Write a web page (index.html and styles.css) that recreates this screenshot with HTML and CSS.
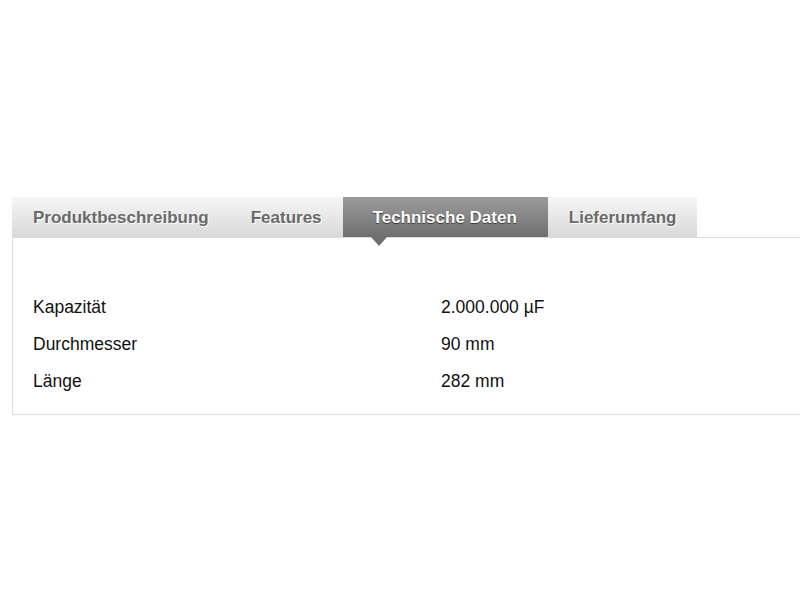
FILE: index.html
```html
<!DOCTYPE html>
<html lang="de">
<head>
<meta charset="utf-8">
<title>Technische Daten</title>
<link rel="stylesheet" href="styles.css">
</head>
<body>
<div class="wrap">
  <ul class="tabs">
    <li class="tab">Produktbeschreibung</li>
    <li class="tab">Features</li>
    <li class="tab active">Technische Daten</li>
    <li class="tab">Lieferumfang</li>
  </ul>
  <div class="panel">
    <dl class="specs">
      <dt>Kapazität</dt><dd>2.000.000 µF</dd>
      <dt>Durchmesser</dt><dd>90 mm</dd>
      <dt>Länge</dt><dd>282 mm</dd>
    </dl>
  </div>
</div>
</body>
</html>
```

FILE: styles.css
```css
html, body {
  margin: 0;
  padding: 0;
  background: #fff;
  font-family: "Liberation Sans", Arial, sans-serif;
}
.wrap {
  padding-top: 197px;
  margin-left: 12px;
}
.tabs {
  list-style: none;
  margin: 0;
  padding: 0;
  display: flex;
  height: 40px;
}
.tab {
  position: relative;
  height: 40px;
  line-height: 41px;
  padding: 0 21px;
  font-size: 17px;
  font-weight: bold;
  color: #6a6a6a;
  text-shadow: 1px 1px 0 #fff;
  background: linear-gradient(#f6f6f6, #d9d9d9);
}
.tab.active {
  padding: 0 31px 0 30px;
  color: #fff;
  text-shadow: 0 1px 1px #333;
  background: linear-gradient(#9c9c9c, #6f6f6f);
}
.tab.active::after {
  content: "";
  position: absolute;
  left: 28px;
  top: 40px;
  border-left: 8px solid transparent;
  border-right: 8px solid transparent;
  border-top: 9px solid #6f6f6f;
}
.panel {
  border: 1px solid #dcdcdc;
  border-right: none;
  padding: 51px 0 14px 20px;
}
.specs {
  margin: 0;
  display: grid;
  grid-template-columns: 408px 1fr;
  font-size: 17.5px;
  line-height: 37px;
  color: #111;
}
.specs dt, .specs dd {
  margin: 0;
}
```
